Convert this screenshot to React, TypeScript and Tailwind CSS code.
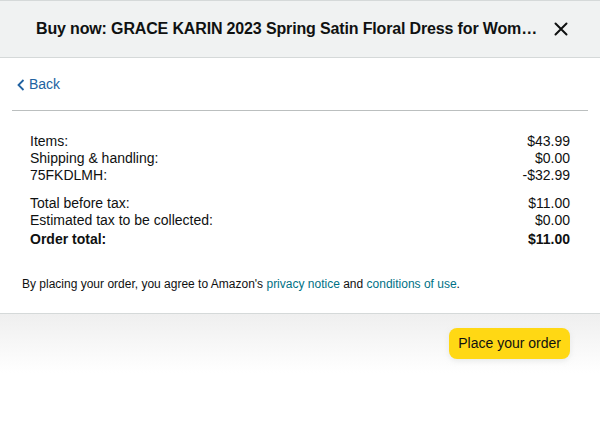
import React from "react";

const rows1 = [
  { label: "Items:", value: "$43.99" },
  { label: "Shipping & handling:", value: "$0.00" },
  { label: "75FKDLMH:", value: "-$32.99" },
];

const rows2 = [
  { label: "Total before tax:", value: "$11.00" },
  { label: "Estimated tax to be collected:", value: "$0.00" },
];

const App = () => {
  return (
    <div
      className="w-[600px] h-[440px] bg-white text-[#0f1111] overflow-hidden"
      style={{ fontFamily: '"Liberation Sans", Arial, sans-serif' }}
    >
      {/* header */}
      <div className="h-[58px] bg-[#f0f2f2] border-t border-b border-[#d5d9d9] flex items-center pl-[36px] pr-[32px]">
        <h1 className="flex-1 text-[16px] tracking-[-0.15px] font-bold whitespace-nowrap overflow-hidden">
          Buy now: GRACE KARIN 2023 Spring Satin Floral Dress for Wom…
        </h1>
        <button className="w-[14px] h-[14px] flex items-center justify-center">
          <svg width="14" height="14" viewBox="0 0 14 14" fill="none">
            <path d="M1.5 1.5 L12.5 12.5 M12.5 1.5 L1.5 12.5" stroke="#0f1111" strokeWidth="2" strokeLinecap="round" />
          </svg>
        </button>
      </div>

      {/* back */}
      <div className="mx-[12px] h-[53px] border-b border-[#bbbfbf] flex items-center pl-[5px] pt-[1px]">
        <a className="flex items-center gap-[4px] text-[14px] text-[#2162a1]">
          <svg width="8" height="12" viewBox="0 0 8 12" fill="none">
            <path d="M6.5 1 L1.5 6 L6.5 11" stroke="#2162a1" strokeWidth="1.8" />
          </svg>
          Back
        </a>
      </div>

      {/* summary */}
      <div className="px-[30px] pt-[22px] text-[14px] leading-[17px]">
        {rows1.map((r) => (
          <div key={r.label} className="flex justify-between">
            <span>{r.label}</span>
            <span>{r.value}</span>
          </div>
        ))}
        <div className="mt-[11px]">
          {rows2.map((r) => (
            <div key={r.label} className="flex justify-between">
              <span>{r.label}</span>
              <span>{r.value}</span>
            </div>
          ))}
          <div className="mt-[2px] flex justify-between font-bold">
            <span>Order total:</span>
            <span>$11.00</span>
          </div>
        </div>
      </div>

      <p className="px-[22px] pt-[28px] pb-[21px] text-[12px] leading-[16px]">
        By placing your order, you agree to Amazon's{" "}
        <a className="text-[#007185]">privacy notice</a> and{" "}
        <a className="text-[#007185]">conditions of use</a>.
      </p>

      {/* footer */}
      <div className="border-t border-[#d5d9d9] bg-gradient-to-b from-[#efefef] to-white h-[60px] flex justify-end items-start pt-[14px] pr-[30px]">
        <button className="h-[31px] px-[9px] rounded-[8px] bg-[#ffd814] text-[14px] text-[#0f1111] shadow-[0_2px_5px_rgba(213,217,217,0.5)]">
          Place your order
        </button>
      </div>
    </div>
  );
};

export default App;
